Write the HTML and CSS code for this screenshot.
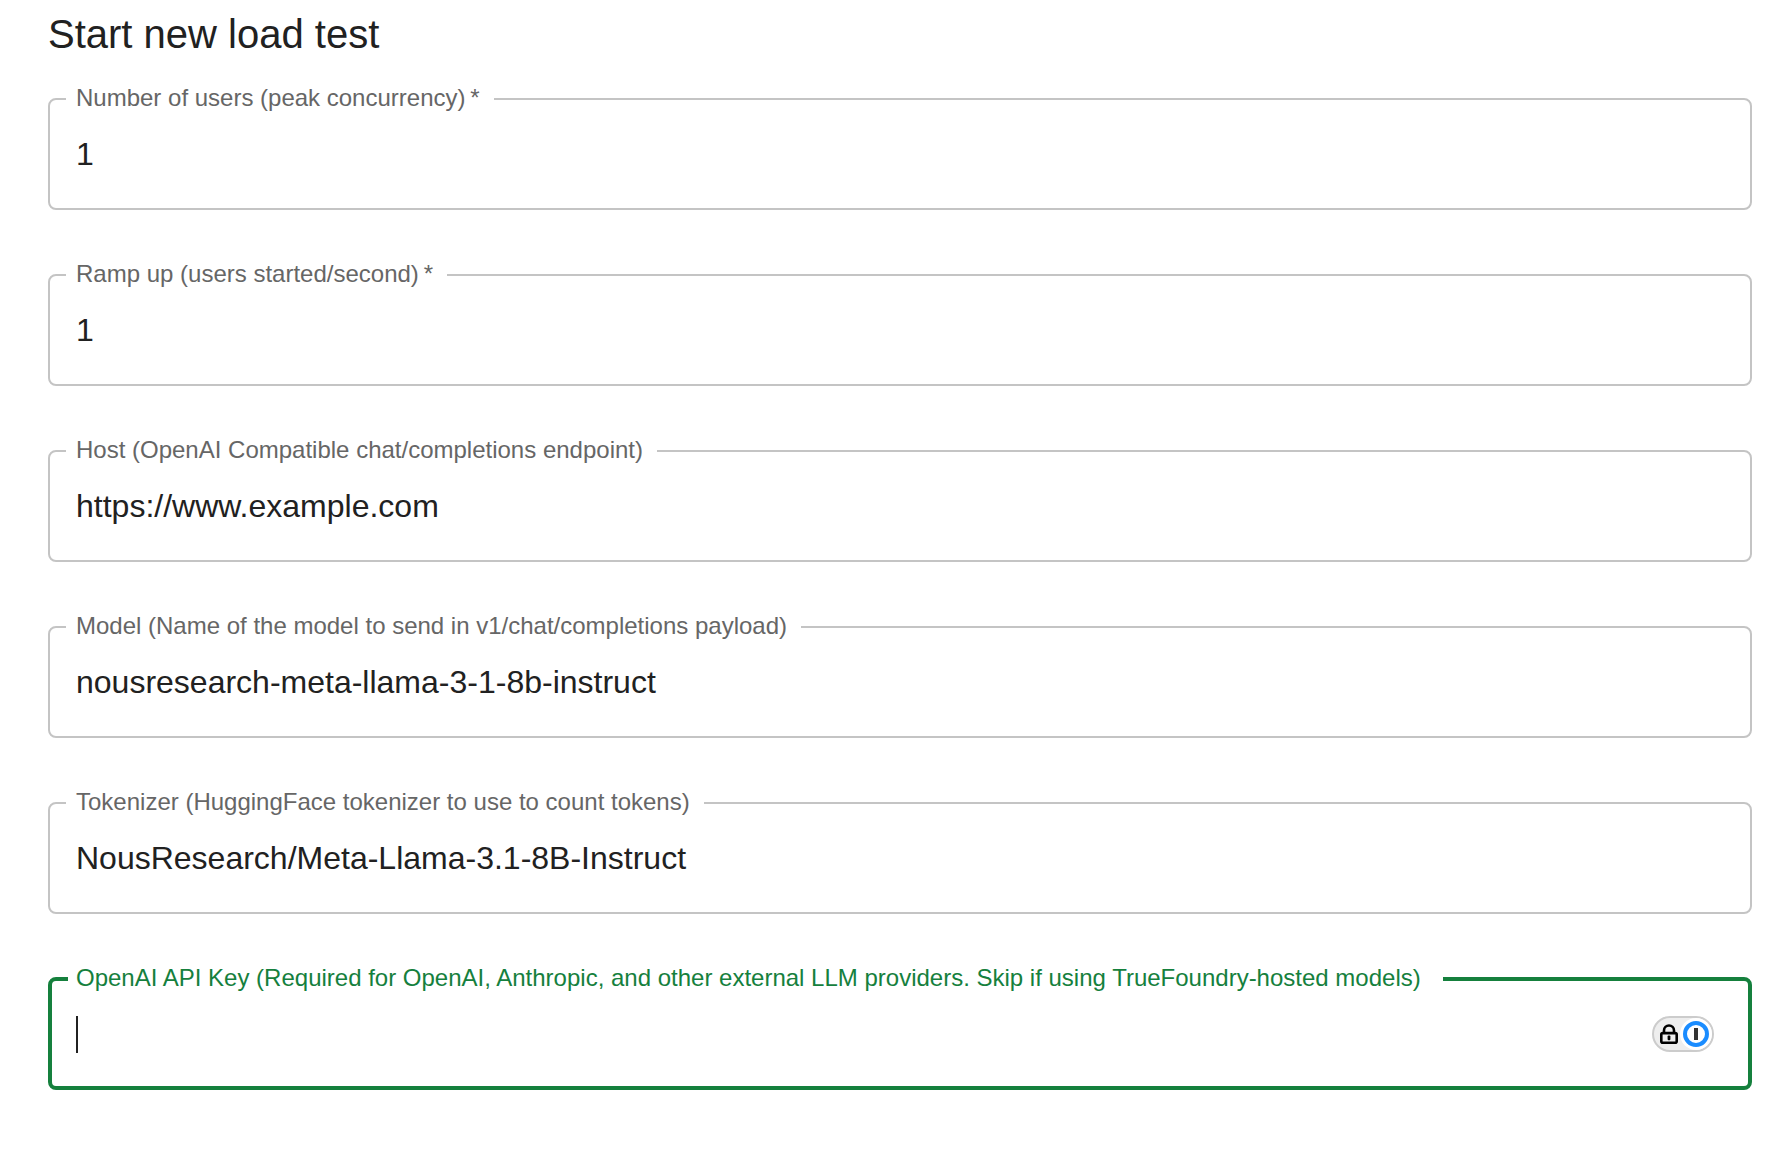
FILE: index.html
```
<!DOCTYPE html>
<html lang="en">
<head>
  <meta charset="UTF-8">
  <meta name="viewport" content="width=device-width, initial-scale=1.0">
  <title>Start new load test</title>
  <link rel="stylesheet" href="styles.css">
</head>
<body>
  <main class="container">
    <h1>Start new load test</h1>

    <form class="load-form" autocomplete="off">
      <fieldset class="field">
        <legend><label for="users">Number of users (peak concurrency)&thinsp;*</label></legend>
        <input type="text" id="users" name="users" value="1" required>
      </fieldset>

      <fieldset class="field">
        <legend><label for="rampUp">Ramp up (users started/second)&thinsp;*</label></legend>
        <input type="text" id="rampUp" name="rampUp" value="1" required>
      </fieldset>

      <fieldset class="field">
        <legend><label for="host">Host (OpenAI Compatible chat/completions endpoint)</label></legend>
        <input type="text" id="host" name="host" value="https://www.example.com" spellcheck="false">
      </fieldset>

      <fieldset class="field">
        <legend><label for="model">Model (Name of the model to send in v1/chat/completions payload)</label></legend>
        <input type="text" id="model" name="model" value="nousresearch-meta-llama-3-1-8b-instruct" spellcheck="false">
      </fieldset>

      <fieldset class="field">
        <legend><label for="tokenizer">Tokenizer (HuggingFace tokenizer to use to count tokens)</label></legend>
        <input type="text" id="tokenizer" name="tokenizer" value="NousResearch/Meta-Llama-3.1-8B-Instruct" spellcheck="false">
      </fieldset>

      <fieldset class="field active">
        <legend><label for="apiKey">OpenAI API Key (Required for OpenAI, Anthropic, and other external LLM providers. Skip if using TrueFoundry-hosted models)</label></legend>
        <div class="field-row">
          <span class="caret"></span>
          <input type="text" id="apiKey" name="apiKey">
          <!-- Password manager button -->
          <button type="button" class="key-button" aria-label="Fill from password manager">
            <svg width="62" height="36" viewBox="0 0 62 36">
              <rect x="1" y="1" width="60" height="34" rx="17" fill="#eeeeee" stroke="#cccccc" stroke-width="2"/>
              <circle cx="44" cy="18" r="16" fill="#ffffff"/>
              <circle cx="44" cy="18" r="11" fill="#ffffff" stroke="#1a8cff" stroke-width="4"/>
              <rect x="42" y="12" width="4" height="12" fill="#333333"/>
              <path d="M12 17v-2.5a5 5 0 0 1 10 0v2.5" fill="none" stroke="#000000" stroke-width="2.6"/>
              <rect x="9.3" y="17.1" width="15.4" height="9.6" rx="1.5" fill="none" stroke="#000000" stroke-width="2.6"/>
              <rect x="15.6" y="19.6" width="2.8" height="4.6" rx="1" fill="#000000"/>
            </svg>
          </button>
        </div>
      </fieldset>
    </form>
  </main>
</body>
</html>
```
FILE: styles.css
```
body {
  font-family: "Liberation Sans", Arial, sans-serif;
  background-color: #fff;
  color: #212121;
  margin: 0;
  padding: 0;
}

.container {
  padding: 2px 34px 40px 48px;
}

h1 {
  margin: 0;
  font-size: 40px;
  font-weight: normal;
  line-height: 64px;
}

.load-form {
  display: flex;
  flex-direction: column;
  gap: 51px;
  margin-top: 19px;
}

.field {
  margin: 0;
  min-width: 0;
  padding: 0 16px 13px;
  border: 2px solid #c4c4c4;
  border-radius: 8px;
}

.field legend {
  padding: 0 14px 2px 10px;
  font-size: 24px;
  line-height: 26px;
  color: #666;
}

.field input {
  display: block;
  box-sizing: border-box;
  width: 100%;
  height: 82px;
  margin: 0;
  padding: 0 10px;
  border: none;
  outline: none;
  background: none;
  font-family: inherit;
  font-size: 32px;
  color: inherit;
}

/* Focused field */
.field.active {
  padding-bottom: 11px;
  border: 4px solid #15803d;
}

.field.active legend {
  padding: 0 22px 2px 8px;
  color: #15803d;
}

.field-row {
  position: relative;
  display: flex;
  align-items: center;
  padding-right: 18px;
}

.field.active input {
  flex: 1;
  padding: 0 8px;
}

.caret {
  position: absolute;
  left: 8px;
  width: 2px;
  height: 37px;
  background-color: #212121;
}

.key-button {
  display: flex;
  padding: 0;
  border: none;
  background: none;
  cursor: pointer;
}
```
